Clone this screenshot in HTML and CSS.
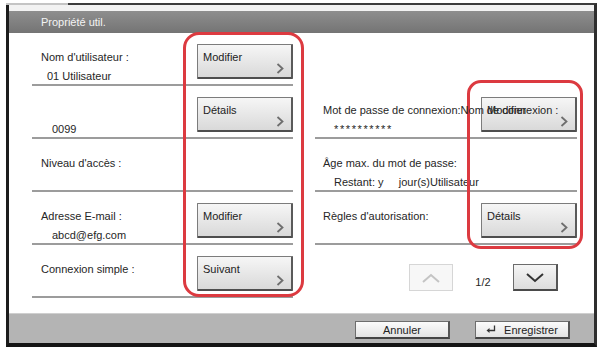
FILE: index.html
```html
<!DOCTYPE html>
<html lang="fr">
  <head>
    <meta charset="UTF-8" />
    <meta name="viewport" content="width=device-width, initial-scale=1.0" />
    <title>Propriété util.</title>
    <link rel="stylesheet" href="styles.css">
  </head>
  <body>
    <div class="frame">
      <div class="title">Propriété util.</div>

      <div class="panel">
        <!-- left column -->
        <div class="col">
          <div class="row">
            <div class="info">
              <div>Nom d'utilisateur :</div>
              <div class="value near">01 Utilisateur</div>
            </div>
            <button class="key">Modifier
              <svg class="chev" width="8" height="11" viewBox="0 0 8 11"><polyline points="1.5,1 6.5,5.5 1.5,10" /></svg>
            </button>
          </div>
          <div class="row">
            <div class="info">
              <div>&nbsp;</div>
              <div class="value">0099</div>
            </div>
            <button class="key">Détails
              <svg class="chev" width="8" height="11" viewBox="0 0 8 11"><polyline points="1.5,1 6.5,5.5 1.5,10" /></svg>
            </button>
          </div>
          <div class="row">
            <div class="info">
              <div>Niveau d'accès :</div>
            </div>
          </div>
          <div class="row">
            <div class="info">
              <div>Adresse E-mail :</div>
              <div class="value">abcd@efg.com</div>
            </div>
            <button class="key">Modifier
              <svg class="chev" width="8" height="11" viewBox="0 0 8 11"><polyline points="1.5,1 6.5,5.5 1.5,10" /></svg>
            </button>
          </div>
          <div class="row">
            <div class="info">
              <div>Connexion simple :</div>
            </div>
            <button class="key">Suivant
              <svg class="chev" width="8" height="11" viewBox="0 0 8 11"><polyline points="1.5,1 6.5,5.5 1.5,10" /></svg>
            </button>
          </div>
        </div>

        <!-- right column -->
        <div class="col right">
          <div class="row plain"></div>
          <div class="row">
            <div class="info front">
              <div>Mot de passe de connexion:Nom de connexion :</div>
              <div class="value stars">**********</div>
            </div>
            <button class="key">Modifier
              <svg class="chev" width="8" height="11" viewBox="0 0 8 11"><polyline points="1.5,1 6.5,5.5 1.5,10" /></svg>
            </button>
          </div>
          <div class="row">
            <div class="info">
              <div>Âge max. du mot de passe:</div>
              <div class="value">Restant: y &nbsp;&nbsp;&nbsp; jour(s)Utilisateur</div>
            </div>
          </div>
          <div class="row">
            <div class="info">
              <div>Règles d'autorisation:</div>
            </div>
            <button class="key">Détails
              <svg class="chev" width="8" height="11" viewBox="0 0 8 11"><polyline points="1.5,1 6.5,5.5 1.5,10" /></svg>
            </button>
          </div>
          <div class="pager">
            <button class="page-btn off">
              <svg width="20" height="10" viewBox="0 0 20 10"><polyline points="2,9 10,2 18,9" /></svg>
            </button>
            <span class="page-num">1/2</span>
            <button class="page-btn">
              <svg width="20" height="11" viewBox="0 0 20 11"><polyline points="2,2 10,9 18,2" /></svg>
            </button>
          </div>
        </div>
      </div>

      <div class="footer">
        <button class="soft">Annuler</button>
        <button class="soft">
          <svg width="10" height="9" viewBox="0 0 10 9"><path d="M8.5 0.5 V5.5 H2.5" /><polygon points="0.5,5.5 3.5,3 3.5,8" /></svg>
          Enregistrer
        </button>
      </div>

      <!-- red highlight marks -->
      <div class="mark mark-left"></div>
      <div class="mark mark-right"></div>
    </div>
  </body>
</html>
```

FILE: styles.css
```css
body {
  margin: 0;
  font-family: "Liberation Sans", Arial, sans-serif;
  font-size: 11px;
  color: #262626;
  background: #fff;
}
.frame {
  position: relative;
  margin: 3px 0 0 6px;
  width: 585px;
  padding-top: 6px;
  border-top: 2px solid #3c3c3c;
  border-left: 3px solid #1c1c1c;
  border-right: 3px solid #2e2e2e;
  border-bottom: 4px solid #141414;
  background: #f2f2f2;
}
.frame::before {
  content: "";
  position: absolute;
  top: -2px;
  left: -3px;
  width: 62px;
  height: 2px;
  background: #c4c4c4;
}
.title {
  height: 22px;
  line-height: 22px;
  padding-left: 32px;
  color: #f4f4f4;
  background: linear-gradient(#8e8e8e, #747474);
}
.panel {
  height: 280px;
  box-sizing: border-box;
  padding-left: 23px;
  background: #fff;
  display: grid;
  grid-template-columns: 261px 262px;
  column-gap: 22px;
}
.row {
  height: 53px;
  box-sizing: border-box;
  padding-top: 11px;
  border-bottom: 2px solid #9c9c9c;
  display: flex;
  justify-content: space-between;
}
.row.plain {
  border-bottom-color: transparent;
}
.info {
  min-width: 0;
  padding: 4px 0 0 9px;
  line-height: 19px;
  white-space: nowrap;
}
.right .info {
  padding-left: 8px;
}
.info.front {
  position: relative;
  z-index: 1;
}
.value {
  padding-left: 11px;
}
.value.near {
  padding-left: 6px;
}
.value.stars {
  letter-spacing: 1.6px;
  line-height: 15px;
  padding-top: 2px;
}
.key {
  flex: none;
  width: 96px;
  height: 35px;
  box-sizing: border-box;
  padding: 6px 7px 3px 5px;
  border: 1px solid #7c7c7c;
  border-right: 2px solid #5a5a5a;
  border-bottom: 2px solid #4e4e4e;
  border-radius: 1px;
  background: linear-gradient(#f6f6f6, #d9d9d9);
  font: inherit;
  color: #222;
  text-align: left;
  display: flex;
  flex-direction: column;
  justify-content: space-between;
}
.chev {
  align-self: flex-end;
  fill: none;
  stroke: #6e6e6e;
  stroke-width: 1.8;
}
.pager {
  display: flex;
  justify-content: flex-end;
  align-items: center;
  padding: 19px 19px 0 0;
}
.page-btn {
  width: 45px;
  height: 27px;
  box-sizing: border-box;
  padding: 0;
  border: 1px solid #6c6c6c;
  border-right: 2px solid #555;
  border-bottom: 2px solid #4a4a4a;
  background: linear-gradient(#f5f5f5, #dcdcdc);
  display: flex;
  align-items: center;
  justify-content: center;
}
.page-btn svg {
  fill: none;
  stroke: #333;
  stroke-width: 2;
}
.page-btn.off {
  width: 44px;
  border: 1px solid #d6d6d6;
  background: #f7f7f7;
}
.page-btn.off svg {
  stroke: #c4c4c4;
}
.page-num {
  width: 60px;
  text-align: center;
  padding-top: 9px;
}
.footer {
  height: 30px;
  box-sizing: border-box;
  padding: 7px 24px 0 0;
  border-top: 1px solid #cfcfcf;
  background: #b4b4b4;
  display: flex;
  justify-content: flex-end;
  align-items: flex-start;
  gap: 25px;
}
.soft {
  width: 95px;
  height: 18px;
  box-sizing: border-box;
  padding: 0;
  border: 1px solid #6d6d6d;
  border-right: 2px solid #555;
  border-bottom: 2px solid #444;
  background: linear-gradient(#fbfbfb, #e3e3e3);
  font: inherit;
  color: #222;
  display: flex;
  align-items: center;
  justify-content: center;
  gap: 8px;
}
.soft svg path {
  fill: none;
  stroke: #333;
  stroke-width: 1.3;
}
.soft svg polygon {
  fill: #333;
}
.mark {
  position: absolute;
  box-sizing: border-box;
  border: 3.5px solid #dc3a40;
  border-radius: 16px;
  pointer-events: none;
}
.mark-left {
  left: 174px;
  top: 27px;
  width: 121px;
  height: 265px;
}
.mark-right {
  left: 458px;
  top: 75px;
  width: 116px;
  height: 169px;
  border-radius: 14px;
}
```
